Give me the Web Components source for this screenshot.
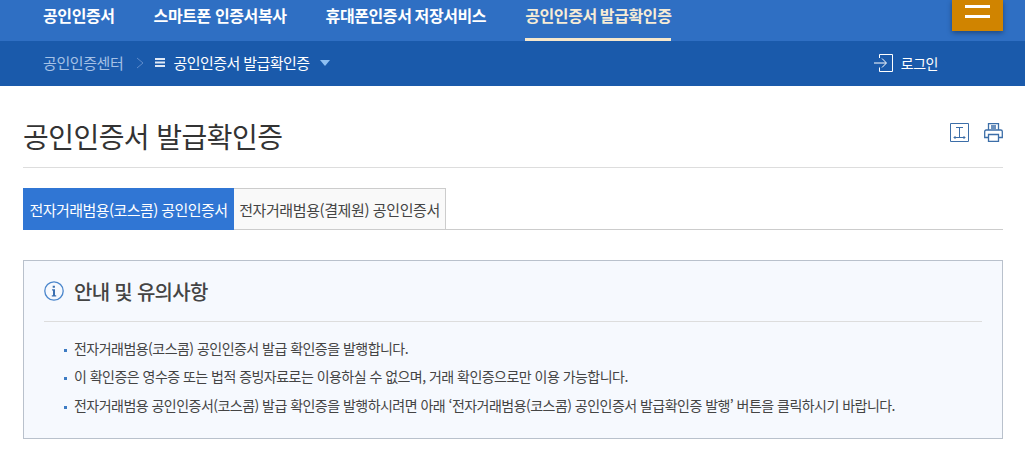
<!DOCTYPE html>
<html lang="ko">
<head>
<meta charset="utf-8">
<title>공인인증서 발급확인증</title>
<style>
  html, body { margin: 0; padding: 0; background: #fff; overflow: hidden; }
  body { font-family: "Noto Sans CJK KR", "Noto Sans", sans-serif; color: #333; }
</style>
</head>
<body>
<top-nav></top-nav>
<sub-nav></sub-nav>
<page-title>공인인증서 발급확인증</page-title>
<cert-tabs></cert-tabs>
<notice-box heading="안내 및 유의사항">
  <li>전자거래범용(코스콤) 공인인증서 발급 확인증을 발행합니다.</li>
  <li>이 확인증은 영수증 또는 법적 증빙자료로는 이용하실 수 없으며, 거래 확인증으로만 이용 가능합니다.</li>
  <li>전자거래범용 공인인증서(코스콤) 발급 확인증을 발행하시려면 아래 ‘전자거래범용(코스콤) 공인인증서 발급확인증 발행’ 버튼을 클릭하시기 바랍니다.</li>
</notice-box>
<script>
class TopNav extends HTMLElement {
  constructor() {
    super();
    this.attachShadow({ mode: "open" });
  }

  connectedCallback() {
    this.shadowRoot.innerHTML = `
      <style>
        :host { display: block; position: relative; height: 41px; background: #2f6fc3; }
        ul { display: flex; gap: 39px; list-style: none; margin: 0; padding: 0 0 0 43px; height: 41px; }
        li { height: 38px; line-height: 30px; font-size: 16px; font-weight: 700; color: #fff; letter-spacing: -0.4px; white-space: nowrap; }
        li.tight { word-spacing: -1px; }
        li.on { color: #f6ecd6; border-bottom: 3px solid #f6e7cb; }
        .menu { position: absolute; left: 952px; top: 0; width: 51px; height: 31px; background: #d08400; box-shadow: 0 2px 5px rgba(0,0,0,.35); }
        .menu i { position: absolute; left: 13px; width: 25px; height: 3px; background: #fff; }
      </style>
      <ul>
        <li>공인인증서</li>
        <li>스마트폰 인증서복사</li>
        <li class="tight">휴대폰인증서 저장서비스</li>
        <li class="on tight">공인인증서 발급확인증</li>
      </ul>
      <div class="menu"><i style="top:5px"></i><i style="top:15px"></i></div>
    `;
  }
}

class SubNav extends HTMLElement {
  constructor() {
    super();
    this.attachShadow({ mode: "open" });
  }

  connectedCallback() {
    this.shadowRoot.innerHTML = `
      <style>
        :host { display: flex; align-items: center; height: 45px; padding: 0 0 2px 43px; box-sizing: border-box; background: #1a5aab; font-size: 15px; letter-spacing: -0.55px; color: #fff; }
        .home { color: #a5c1e6; letter-spacing: -0.4px; }
        .sep { margin: 0 11px 0 13px; }
        .bars { margin-right: 8px; }
        .caret { margin-left: 10px; }
        .login { display: flex; align-items: center; gap: 8px; margin-left: auto; margin-right: 87px; font-size: 14px; letter-spacing: -0.5px; }
        svg { display: block; }
      </style>
      <span class="home">공인인증센터</span>
      <svg class="sep" width="8" height="12" viewBox="0 0 8 12" fill="none" stroke="#5f8ccb"><path d="M1 1l6 5-6 5"/></svg>
      <svg class="bars" width="10" height="9" viewBox="0 0 10 9" fill="#dfe9f7"><path d="M0 0h10v2H0zM0 3.500h10v2H0zM0 7h10v2H0z"/></svg>
      <span>공인인증서 발급확인증</span>
      <svg class="caret" width="10" height="6" viewBox="0 0 10 6" fill="#8fc0f2"><path d="M0 0h10L5 6z"/></svg>
      <span class="login">
        <svg width="19" height="18" viewBox="0 0 19 18" fill="none" stroke="#fff"><path d="M5.500 4V.5h13v17h-13v-4"/><path d="M0 9h12M8 4.500l4.500 4.500L8 13.500"/></svg>
        <span>로그인</span>
      </span>
    `;
  }
}

class PageTitle extends HTMLElement {
  constructor() {
    super();
    this.attachShadow({ mode: "open" });
  }

  connectedCallback() {
    this.shadowRoot.innerHTML = `
      <style>
        :host { display: flex; align-items: center; justify-content: space-between; box-sizing: border-box; height: 82px; padding-top: 18px; margin: 0 22px 0 23px; border-bottom: 1px solid #ddd; font-size: 28px; letter-spacing: -0.55px; color: #333; }
        .tools { display: flex; gap: 15px; margin-top: -7px; }
        svg { display: block; }
      </style>
      <slot></slot>
      <div class="tools">
        <svg width="19" height="19" viewBox="0 0 19 19" fill="none" stroke="#3c6ea8"><path d="M.5 .5h18v18H.5z"/><path d="M6 4.500h7M9.500 4.500v9.500M4 14.500h11M5.500 13l-1.500 1.500 1.500 1.500M13.500 13l1.500 1.500-1.500 1.500"/></svg>
        <svg width="19" height="19" viewBox="0 0 19 19" fill="none" stroke="#3c6ea8" stroke-width="1.300"><path d="M4.500 7V.7h10V7M4.500 14.500H.7V8.500q0-1.500 1.500-1.500h14.600q1.500 0 1.500 1.500v6h-3.800M4.500 11.500h10v7h-10zM7 3h5M7 5h5"/></svg>
      </div>
    `;
  }
}

class CertTabs extends HTMLElement {
  constructor() {
    super();
    this.attachShadow({ mode: "open" });
  }

  connectedCallback() {
    this.shadowRoot.innerHTML = `
      <style>
        :host { display: flex; height: 41px; margin: 20px 22px 0 23px; border-bottom: 1px solid #ccc; font-size: 15px; }
        div { display: flex; align-items: center; justify-content: center; box-sizing: border-box; height: 42px; white-space: nowrap; }
        .on { width: 211px; background: #3076d4; color: #fff; letter-spacing: -0.55px; }
        .off { width: 212px; background: #f9f9f9; color: #444; border: 1px solid #ccc; border-left: 0; letter-spacing: -0.4px; }
      </style>
      <div class="on">전자거래범용(코스콤) 공인인증서</div>
      <div class="off">전자거래범용(결제원) 공인인증서</div>
    `;
  }
}

class NoticeBox extends HTMLElement {
  constructor() {
    super();
    this.attachShadow({ mode: "open" });
  }

  connectedCallback() {
    this.shadowRoot.innerHTML = `
      <style>
        :host { display: block; box-sizing: border-box; height: 179px; margin: 30px 22px 0 23px; padding: 0 20px; background: #f6f9fe; border: 1px solid #b9c1cc; }
        header { display: flex; align-items: center; gap: 10px; height: 60px; border-bottom: 1px solid #ddd; font-size: 20px; font-weight: 500; color: #444; letter-spacing: -0.7px; }
        svg { display: block; }
        ul { margin: 0; padding: 12px 0 0 30px; }
        ::slotted(li) { height: 29px; line-height: 28.5px; font-size: 14px; letter-spacing: -0.53px; color: #444; white-space: nowrap; list-style: none; position: relative; }
        ::slotted(li:first-child) { height: 28px; }
        ::slotted(li)::before { content: ""; position: absolute; left: -10px; top: 15px; width: 3px; height: 3px; background: #3d7cc4; }
      </style>
      <header>
        <svg width="20" height="20" viewBox="0 0 20 20"><circle cx="10" cy="10" r="9.200" fill="none" stroke="#4a86cc" stroke-width="1.300"/><path d="M8.700 4.700h2.200v2H8.700zM8 8.300h3v6h1.200v1.200H7.800v-1.200H9V9.500H8z" fill="#3a6fb0"/></svg>
        <span></span>
      </header>
      <ul><slot></slot></ul>
    `;
    this.shadowRoot.querySelector("header span").textContent = this.getAttribute("heading");
  }
}

customElements.define("top-nav", TopNav);
customElements.define("sub-nav", SubNav);
customElements.define("page-title", PageTitle);
customElements.define("cert-tabs", CertTabs);
customElements.define("notice-box", NoticeBox);
</script>
</body>
</html>
